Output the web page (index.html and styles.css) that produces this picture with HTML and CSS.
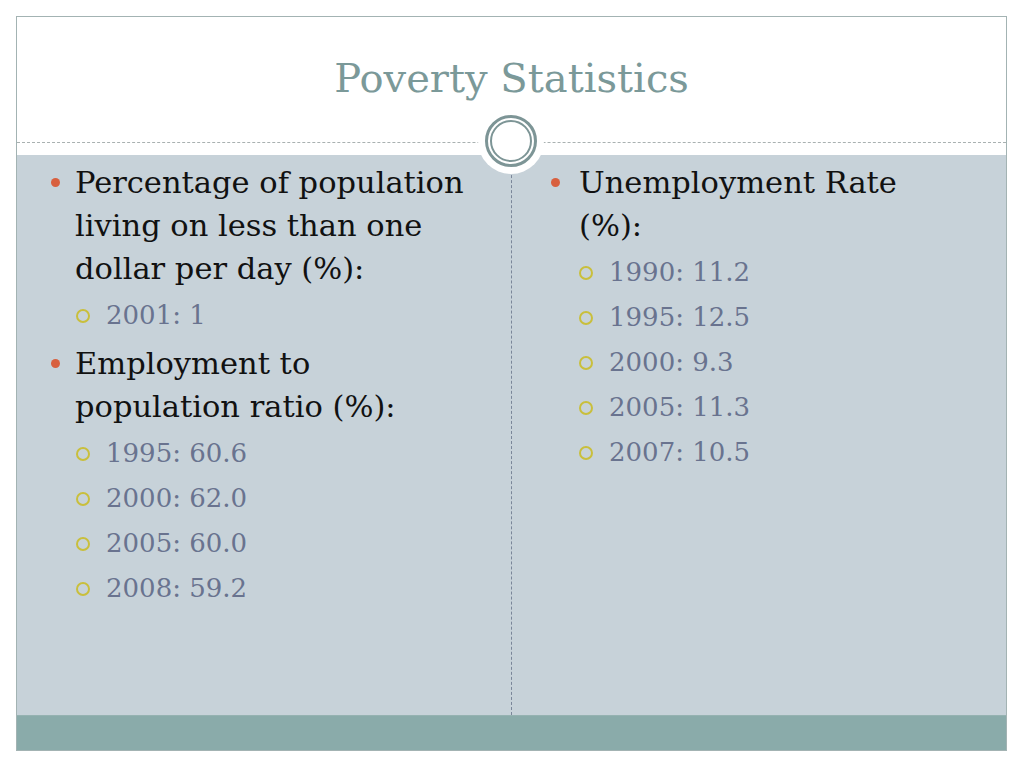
FILE: index.html
```html
<!DOCTYPE html>
<html>
<head>
<meta charset="utf-8">
<link rel="stylesheet" href="styles.css">
</head>
<body>
<div class="slide">
  <header class="head">
    <h1 class="title">Poverty Statistics</h1>
    <div class="rule"></div>
    <div class="medallion"><div class="ring"><div class="ring-inner"></div></div></div>
  </header>
  <main class="content">
    <section class="col col-left">
      <ul class="list">
        <li class="item">Percentage of population living on less than one dollar per day (%):
          <ul class="sub">
            <li>2001: 1</li>
          </ul>
        </li>
        <li class="item">Employment to population ratio (%):
          <ul class="sub">
            <li>1995: 60.6</li>
            <li>2000: 62.0</li>
            <li>2005: 60.0</li>
            <li>2008: 59.2</li>
          </ul>
        </li>
      </ul>
    </section>
    <section class="col col-right">
      <ul class="list">
        <li class="item">Unemployment Rate (%):
          <ul class="sub">
            <li>1990: 11.2</li>
            <li>1995: 12.5</li>
            <li>2000: 9.3</li>
            <li>2005: 11.3</li>
            <li>2007: 10.5</li>
          </ul>
        </li>
      </ul>
    </section>
  </main>
  <footer class="foot"></footer>
</div>
</body>
</html>
```
FILE: styles.css
```css
html, body {
  margin: 0;
  padding: 0;
  background: #ffffff;
}
.slide {
  margin: 16px 0 0 16px;
  width: 989px;
  border: 1px solid #a3b3b3;
  display: flex;
  flex-direction: column;
  font-family: "DejaVu Serif", Georgia, serif;
}
.head {
  position: relative;
  height: 138px;
  background: #ffffff;
}
.title {
  margin: 0;
  padding-top: 36px;
  text-align: center;
  font-weight: normal;
  font-size: 40px;
  line-height: 50px;
  color: #7b9999;
}
.rule {
  position: absolute;
  left: 0;
  right: 0;
  top: 125px;
  border-top: 1px dashed #a9b1b1;
}
.medallion {
  position: absolute;
  left: 461px;
  top: 91px;
  width: 66px;
  height: 66px;
  border-radius: 50%;
  background: #ffffff;
  display: flex;
  align-items: center;
  justify-content: center;
  z-index: 2;
}
.ring {
  width: 46px;
  height: 46px;
  border: 3px solid #7d9596;
  border-radius: 50%;
  display: flex;
  align-items: center;
  justify-content: center;
}
.ring-inner {
  width: 38px;
  height: 38px;
  border: 2px solid #7d9596;
  border-radius: 50%;
  background: #ffffff;
}
.content {
  height: 560px;
  background: #c7d2d9;
  display: flex;
}
.col {
  box-sizing: border-box;
  padding-top: 6px;
}
.col-left {
  width: 495px;
  padding-left: 58px;
  padding-right: 36px;
  border-right: 1px dashed #7a8699;
}
.col-right {
  flex: 1;
  padding-left: 67px;
  padding-right: 46px;
}
.list {
  list-style: none;
  margin: 0;
  padding: 0;
}
.item {
  position: relative;
  font-size: 30.5px;
  line-height: 43px;
  color: #111111;
}
.item::before {
  content: "";
  position: absolute;
  left: -24px;
  top: 17px;
  width: 9px;
  height: 9px;
  border-radius: 50%;
  background: #d8603f;
}
.col-right .item::before {
  left: -28px;
}
.sub {
  list-style: none;
  margin: 3px 0 4px 0;
  padding: 0 0 0 31px;
}
.col-right .sub {
  padding-left: 30px;
}
.sub li {
  position: relative;
  font-size: 26px;
  line-height: 45px;
  color: #69738f;
}
.sub li::before {
  content: "";
  position: absolute;
  left: -30px;
  top: 16px;
  width: 10px;
  height: 10px;
  border: 2px solid #c9bf3c;
  border-radius: 50%;
}
.foot {
  height: 34px;
  background: #8aabaa;
  border-top: 1px solid #95b2b1;
}
```
